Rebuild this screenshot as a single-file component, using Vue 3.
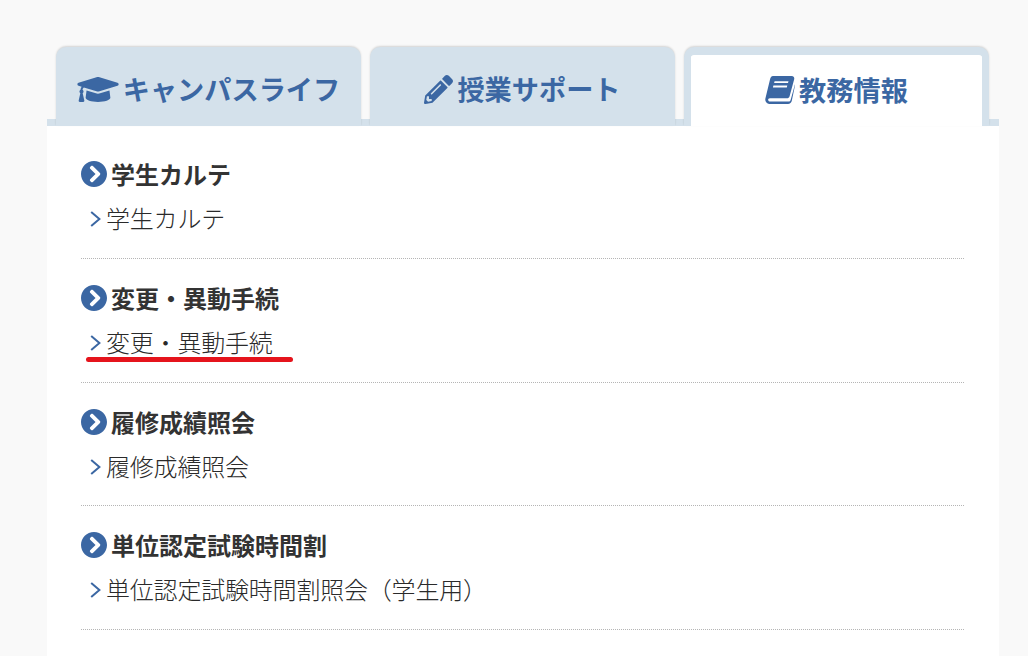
<script setup>
const tabs = [
  { label: 'キャンパスライフ', icon: 'cap', active: false },
  { label: '授業サポート', icon: 'pencil', active: false },
  { label: '教務情報', icon: 'book', active: true },
]

const sections = [
  { title: '学生カルテ', link: '学生カルテ' },
  { title: '変更・異動手続', link: '変更・異動手続', marked: true },
  { title: '履修成績照会', link: '履修成績照会' },
  { title: '単位認定試験時間割', link: '単位認定試験時間割照会（学生用）' },
]
</script>

<template>
  <div class="page">
    <ul class="tabs">
      <li v-for="tab in tabs" :key="tab.label" class="tab" :class="{ active: tab.active }">
        <svg v-if="tab.icon === 'cap'" class="icon cap" viewBox="0 0 640 512">
          <path d="M622.34 153.2L343.4 67.5c-15.2-4.67-31.6-4.67-46.79 0L17.66 153.2c-23.54 7.23-23.54 38.36 0 45.59l48.63 14.94c-10.67 13.19-17.23 29.28-17.88 46.9C38.78 266.15 32 276.11 32 288c0 10.78 5.68 19.85 13.86 25.65L20.33 428.53C18.11 438.52 25.71 448 35.94 448h56.11c10.24 0 17.84-9.48 15.62-19.47L82.14 313.65C90.32 307.85 96 298.78 96 288c0-11.57-6.47-21.25-15.66-26.87.76-15.02 8.44-28.3 20.69-36.72L296.6 284.5c9.06 2.78 26.44 6.25 46.79 0l278.95-85.7c23.55-7.24 23.55-38.36 0-45.6zM352.79 315.09c-28.53 8.76-52.84 3.92-65.59 0l-145.02-44.55L128 384c0 35.35 85.96 64 192 64s192-28.65 192-64l-14.18-113.47-145.03 44.56z" />
        </svg>
        <svg v-else-if="tab.icon === 'pencil'" class="icon pencil" viewBox="0 0 512 512">
          <path d="M497.9 142.1l-46.1 46.1c-4.7 4.7-12.3 4.7-17 0l-111-111c-4.7-4.7-4.7-12.3 0-17l46.1-46.1c18.7-18.7 49.1-18.7 67.9 0l60.1 60.1c18.8 18.7 18.8 49.1 0 67.9zM284.2 99.8L21.6 362.4.4 483.9c-2.9 16.4 11.4 30.6 27.8 27.8l121.5-21.3 262.6-262.6c4.7-4.7 4.7-12.3 0-17l-111-111c-4.8-4.7-12.4-4.7-17.1 0zM124.1 339.9c-5.5-5.5-5.5-14.3 0-19.8l154-154c5.5-5.5 14.3-5.5 19.8 0s5.5 14.3 0 19.8l-154 154c-5.5 5.5-14.3 5.5-19.8 0zM88 424h48v36.3l-64.5 11.3-31.1-31.1L51.7 376H88v48z" />
        </svg>
        <svg v-else class="icon book" viewBox="0 0 30 28">
          <path fill-rule="evenodd" d="M8 0H26.5C28.6 0 29.7 1.4 29.2 3.2L24.6 20.2C24.2 21.6 23.2 22.2 21.8 22.2H5C3.6 22.2 3 23 3.2 24C3.4 25 4.2 25.6 5.4 25.6H23.5C24.6 25.6 25.2 25 25.6 24L30 8.2V9.6L26.8 24.8C26.4 26.8 25 28 23 28H5C2.2 28 0 25.8 0.3 23C0.4 22.4 0.5 21.8 0.7 21.2L5 3.4C5.5 1.4 6.3 0 8 0ZM9.6 5.2L9.1 7H23L23.5 5.2ZM8.4 9.6L7.9 11.4H21.8L22.3 9.6Z" />
        </svg>
        <span>{{ tab.label }}</span>
      </li>
    </ul>
    <div class="panel">
      <section v-for="item in sections" :key="item.title" class="section">
        <h3 class="title">
          <svg class="bullet" viewBox="8 8 496 496">
            <path d="M256 8c137 0 248 111 248 248S393 504 256 504 8 393 8 256 119 8 256 8zm113.9 231L234.4 103.5c-9.4-9.4-24.6-9.4-33.9 0l-17 17c-9.4 9.4-9.4 24.6 0 33.9L285.1 256 183.5 357.6c-9.4 9.4-9.4 24.6 0 33.9l17 17c9.4 9.4 24.6 9.4 33.9 0L369.9 273c9.4-9.4 9.4-24.6 0-34z" />
          </svg>
          {{ item.title }}
        </h3>
        <a class="link">
          <svg class="arrow" viewBox="0 0 11 16">
            <path d="M1.2 1L9.4 8L1.2 15" />
          </svg>
          {{ item.link }}
          <i v-if="item.marked" class="mark"></i>
        </a>
      </section>
    </div>
  </div>
</template>

<style>
html, body {
  margin: 0;
  height: 100%;
  overflow: hidden;
  background: #f9f9f9;
}
</style>

<style scoped>
.page {
  padding: 47px 29px 0 47px;
  font-family: "Noto Sans CJK JP", "Noto Sans", sans-serif;
}

.tabs {
  display: grid;
  grid-template-columns: repeat(3, 1fr);
  gap: 9px;
  list-style: none;
  margin: 0 0 -7px;
  padding: 0 10px 0 9px;
  position: relative;
}

.tab {
  height: 79px;
  box-sizing: border-box;
  padding-top: 5px;
  display: flex;
  align-items: center;
  justify-content: center;
  gap: 4px;
  background: #d4e1eb;
  border-radius: 10px 10px 0 0;
  box-shadow: 0 -1px 2px rgba(0, 0, 0, 0.15);
  color: #3b67a3;
  font-size: 27.2px;
  font-weight: 700;
  line-height: 1;
}

.tab.active {
  border: solid #d4e1eb;
  border-width: 8px 7px 0;
  padding: 0 0 2px;
  background: #fff;
  background-clip: padding-box;
}

.icon {
  fill: #3b67a3;
  flex: none;
}

.cap {
  width: 42px;
  height: 33px;
}

.pencil {
  width: 29px;
  height: 29px;
}

.book {
  width: 30px;
  height: 28px;
}

.panel {
  background: #fff;
  border-top: 7px solid #d4e1eb;
  padding: 8.8px 35px 0 34px;
  height: 530px;
}

.section {
  height: 123.9px;
  box-sizing: border-box;
  padding-top: 22px;
  border-bottom: 1px dotted #b5b5b5;
}

.title {
  display: flex;
  align-items: center;
  gap: 4px;
  margin: 0;
  height: 34px;
  font-size: 24px;
  font-weight: 700;
  color: #333;
  line-height: 34px;
}

.bullet {
  width: 26px;
  height: 26px;
  fill: #3b67a3;
  flex: none;
}

.link {
  display: inline-flex;
  align-items: center;
  position: relative;
  gap: 6px;
  margin: 10px 0 0 8px;
  height: 34px;
  font-size: 24px;
  font-weight: 300;
  letter-spacing: -0.2px;
  color: #2a2a2a;
  line-height: 34px;
}

.arrow {
  width: 11px;
  height: 16px;
  margin: 2px -1px 0 1px;
  fill: none;
  stroke: #3b67a3;
  stroke-width: 2;
  flex: none;
}

.mark {
  position: absolute;
  left: -3px;
  right: -20px;
  bottom: -3px;
  height: 5px;
  border-radius: 3px;
  background: #e5141c;
}
</style>
